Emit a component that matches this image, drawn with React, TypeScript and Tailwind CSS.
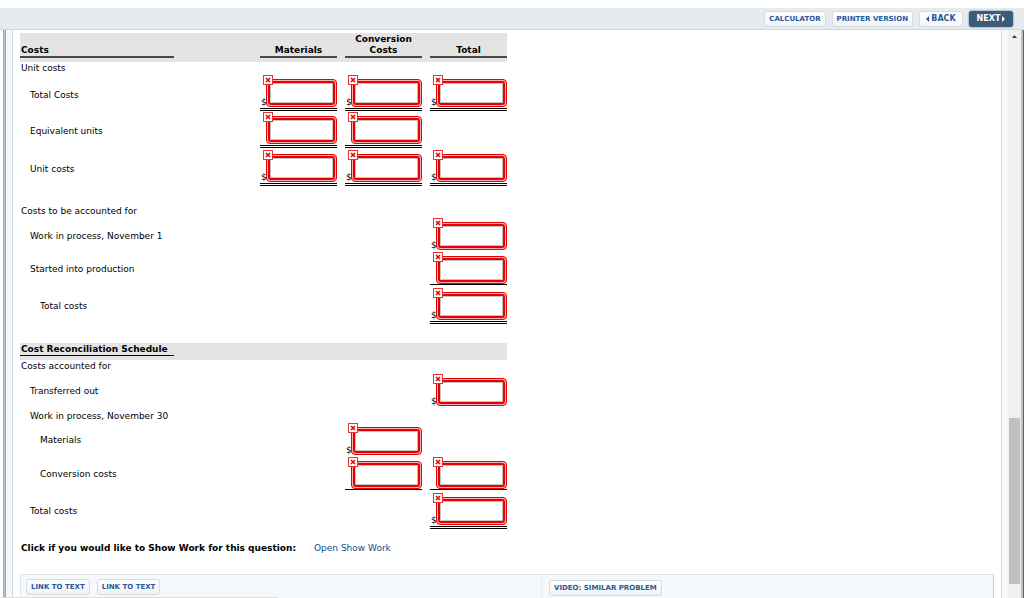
// src/App.tsx
import React from 'react';

type Rule = 'none' | 'single' | 'double';

interface AnswerCell {
    dollar?: boolean;
    rule?: Rule;
}

interface ScheduleLine {
    label: string;
    indent: 0 | 1 | 2;
    height: string;
    cells?: (AnswerCell | null)[];
}

const columns = ['Materials', 'Conversion Costs', 'Total'];

const dollarDouble: AnswerCell = { dollar: true, rule: 'double' };
const plainDouble: AnswerCell = { rule: 'double' };
const plainSingle: AnswerCell = { rule: 'single' };
const dollarOnly: AnswerCell = { dollar: true };

const costLines: ScheduleLine[] = [
    { label: 'Unit costs', indent: 0, height: 'h-[13px]' },
    { label: 'Total Costs', indent: 1, height: 'h-9', cells: [dollarDouble, dollarDouble, dollarDouble] },
    { label: 'Equivalent units', indent: 1, height: 'h-[37px]', cells: [plainDouble, plainDouble, null] },
    { label: 'Unit costs', indent: 1, height: 'h-[38px]', cells: [dollarDouble, dollarDouble, dollarDouble] },
    { label: '', indent: 0, height: 'h-[19px]' },
    { label: 'Costs to be accounted for', indent: 0, height: 'h-[13px]' },
    { label: 'Work in process, November 1', indent: 1, height: 'h-8', cells: [null, null, dollarOnly] },
    { label: 'Started into production', indent: 1, height: 'h-[35px]', cells: [null, null, plainSingle] },
    { label: 'Total costs', indent: 2, height: 'h-[39px]', cells: [null, null, dollarDouble] },
    { label: '', indent: 0, height: 'h-[19px]' },
];

const reconciliationLines: ScheduleLine[] = [
    { label: 'Costs accounted for', indent: 0, height: 'h-[13px]' },
    { label: 'Transferred out', indent: 1, height: 'h-[33px]', cells: [null, null, dollarOnly] },
    { label: 'Work in process, November 30', indent: 1, height: 'h-4' },
    { label: 'Materials', indent: 2, height: 'h-[33px]', cells: [null, dollarOnly, null] },
    { label: 'Conversion costs', indent: 2, height: 'h-[35px]', cells: [null, plainSingle, plainSingle] },
    { label: 'Total costs', indent: 1, height: 'h-[39px]', cells: [null, null, dollarDouble] },
];

const indentClass = ['pl-px', 'pt-1 pl-[10px]', 'pt-1 pl-5'];

const ruleClass: Record<Rule, string> = {
    none: '',
    single: 'border-b border-black',
    double: 'border-b-3 border-double border-black pb-px',
};

const WrongMark: React.FC = () => (
    <svg className="absolute -top-[5px] -left-1" width="10" height="10" viewBox="0 0 10 10" role="img" aria-label="Incorrect">
        <rect x="0.5" y="0.5" width="9" height="9" fill="#fff" stroke="#ee3030" />
        <path d="M3 3l4 4M7 3L3 7" stroke="#e60000" strokeWidth="1.5" />
    </svg>
);

const AnswerBox: React.FC<AnswerCell & { label: string }> = ({ dollar, rule = 'none', label }) => (
    <div className={`flex items-end ${ruleClass[rule]}`}>
        <span className="w-[6px] pl-px text-[9px] leading-[10px]">{dollar ? '$' : ''}</span>
        <div className="relative h-7 flex-1 rounded-[4px] border border-[#e60000] bg-[#f8b4b4] p-px">
            <div className="h-full rounded-[3px] border-2 border-[#e60000] bg-[#e60000]">
                <input
                    type="text"
                    aria-label={label}
                    className="block h-full w-full border border-[#c4c4c4] bg-white px-1 text-right text-[10px] outline-none"
                />
            </div>
            <WrongMark />
        </div>
    </div>
);

const ScheduleRow: React.FC<{ line: ScheduleLine }> = ({ line }) => (
    <tr className={line.height}>
        <th scope="row" className={`text-left align-middle font-normal whitespace-nowrap ${indentClass[line.indent]}`}>
            {line.label}
        </th>
        {columns.map((column, i) => {
            const cell = line.cells?.[i];
            return (
                <td key={column} className="p-0 pl-2 align-bottom">
                    {cell && <AnswerBox {...cell} label={`${line.label} ${column}`} />}
                </td>
            );
        })}
    </tr>
);

const SmallButton: React.FC<{ children: React.ReactNode }> = ({ children }) => (
    <button className="h-4 rounded-[3px] border border-[#d5dbe2] bg-gradient-to-b from-white to-[#f0f3f6] px-1 text-[7px] leading-3 font-bold whitespace-nowrap text-[#2a5a9b]">
        {children}
    </button>
);

const Toolbar: React.FC = () => (
    <header className="mt-2 flex h-[22px] shrink-0 items-center justify-end gap-[6px] border-b border-[#cdd8e1] bg-[#e6ebef] pr-[11px]">
        <SmallButton>CALCULATOR</SmallButton>
        <SmallButton>PRINTER VERSION</SmallButton>
        <button className="flex h-4 w-11 items-center justify-center gap-[2px] rounded-[3px] border border-[#d5dbe2] bg-gradient-to-b from-white to-[#f4f6f8] text-[8px] font-bold text-[#2a5a9b]">
            <svg width="3" height="6" viewBox="0 0 3 6"><path d="M3 0v6L0 3z" fill="currentColor" /></svg>
            BACK
        </button>
        <button className="flex h-4 w-11 items-center justify-center gap-[2px] rounded-[3px] bg-[#3c5b78] text-[8px] font-bold text-white shadow-[0_0_2px_#3c5b78]">
            NEXT
            <svg width="3" height="6" viewBox="0 0 3 6"><path d="M0 0v6l3-3z" fill="currentColor" /></svg>
        </button>
    </header>
);

const ScrollTrack: React.FC = () => (
    <div className="flex w-[13px] shrink-0 flex-col items-center bg-[#f0f0f0]">
        <svg className="mt-1" width="5" height="4" viewBox="0 0 5 4"><path d="M0 4L2.500 1 5 4z" fill="#404040" /></svg>
        <div className="grow-[380]" />
        <div className="w-[11px] grow-[166] bg-[#c1c1c1]" />
        <div className="grow-[14]" />
    </div>
);

const App: React.FC = () => (
    <div className="relative flex h-screen flex-col overflow-hidden bg-white font-['DejaVu_Sans',sans-serif] text-[9px] leading-[11px] text-black">
        <Toolbar />
        <div className="flex min-h-0 flex-1">
            <div className="ml-[3px] w-[3px] shrink-0 border-x border-[#a4a4a4] bg-[#c8c8c8]" />
            <div className="w-[7px] shrink-0 border-r border-[#cdd8e5] bg-[#f5f9fc]" />
            <main className="min-w-0 flex-1 overflow-hidden pt-[3px] pr-[7px] pl-[7px]">
                <table className="w-[487px] table-fixed border-collapse">
                    <colgroup>
                        <col />
                        <col className="w-[85px]" />
                        <col className="w-[85px]" />
                        <col className="w-[85px]" />
                    </colgroup>
                    <thead>
                        <tr className="h-[29px] bg-[#e4e4e4]">
                            <th scope="col" className="p-0 pb-1 text-left align-bottom">
                                <div className="w-[154px] border-b-2 border-[#484848] pl-px">Costs</div>
                            </th>
                            {columns.map((column) => (
                                <th key={column} scope="col" className="p-0 pb-1 pl-2 align-bottom">
                                    <div className="border-b-2 border-[#484848] px-2">{column}</div>
                                </th>
                            ))}
                        </tr>
                    </thead>
                    <tbody>
                        {costLines.map((line, i) => (
                            <ScheduleRow key={i} line={line} />
                        ))}
                        <tr className="h-[17px] bg-[#e4e4e4]">
                            <th scope="colgroup" colSpan={4} className="p-0 pb-1 text-left align-bottom">
                                <div className="w-[154px] border-b border-black pl-px whitespace-nowrap">Cost Reconciliation Schedule</div>
                            </th>
                        </tr>
                        {reconciliationLines.map((line, i) => (
                            <ScheduleRow key={i} line={line} />
                        ))}
                    </tbody>
                </table>

                <p className="mt-[14px] flex gap-[18px] pl-px">
                    <b>Click if you would like to Show Work for this question:</b>
                    <a href="#show-work" className="text-[#0f4f87]">Open Show Work</a>
                </p>

                {/* Resource links */}
                <div className="mt-5 flex h-10 border border-[#dfe5ee] border-r-[#c5ccda] bg-[#f5f9fc]">
                    <div className="flex w-[521px] items-start gap-[7px] border-r border-[#e9eef3] pt-1 pl-[5px]">
                        <SmallButton>LINK TO TEXT</SmallButton>
                        <SmallButton>LINK TO TEXT</SmallButton>
                    </div>
                    <div className="flex items-start pt-[5px] pl-[7px]">
                        <SmallButton>VIDEO: SIMILAR PROBLEM</SmallButton>
                    </div>
                </div>
            </main>
            <div className="w-[7px] shrink-0 border-l border-[#d5dae4] bg-[#f5f9fc]" />
            <ScrollTrack />
            <div className="w-[3px] shrink-0 border-r border-[#606060] bg-[#c0c0c0]" />
        </div>
        <div className="absolute bottom-0 left-0 h-px w-[278px] bg-[#e0e0e0]" />
    </div>
);

export default App;
